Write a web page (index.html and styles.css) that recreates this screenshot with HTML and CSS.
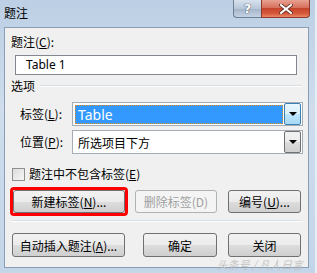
FILE: index.html
```html
<!DOCTYPE html>
<html lang="zh-CN">
<head>
    <meta charset="UTF-8">
    <title>题注</title>
    <link rel="stylesheet" href="styles.css">
</head>
<body>

    <div class="window">
        <div class="titlebar">
            <span class="title">题注</span>
            <div class="caption-buttons">
                <span class="cap-btn help">?</span>
                <span class="cap-btn close">
                    <svg width="14" height="10" viewBox="0 0 14 10">
                        <path d="M2 1 L12 9 M12 1 L2 9" stroke="#5a2a20" stroke-width="3.6" stroke-linecap="square"/>
                        <path d="M2 1 L12 9 M12 1 L2 9" stroke="#ffffff" stroke-width="2" stroke-linecap="square"/>
                    </svg>
                </span>
            </div>
        </div>

        <div class="client">
            <div class="field-label">题注(<u>C</u>):</div>
            <div class="textbox">Table 1</div>

            <div class="group">
                <span>选项</span>
                <span class="group-line"></span>
            </div>

            <div class="combo-row">
                <span class="combo-label">标签(<u>L</u>):</span>
                <div class="combo">
                    <span class="combo-value selected">Table</span>
                    <span class="drop hot"><span class="arrow"></span></span>
                </div>
            </div>
            <div class="combo-row second">
                <span class="combo-label">位置(<u>P</u>):</span>
                <div class="combo">
                    <span class="combo-value">所选项目下方</span>
                    <span class="drop"><span class="arrow"></span></span>
                </div>
            </div>

            <label class="check-row">
                <span class="checkbox"></span>
                <span>题注中不包含标签(<u>E</u>)</span>
            </label>

            <div class="button-row">
                <div class="highlight">
                    <button class="btn w-new">新建标签(<u>N</u>)...</button>
                </div>
                <button class="btn w-del" disabled>删除标签(D)</button>
                <button class="btn w-num">编号(<u>U</u>)...</button>
            </div>

            <div class="separator"></div>

            <div class="button-row bottom">
                <button class="btn w-auto">自动插入题注(<u>A</u>)...</button>
                <button class="btn w-ok">确定</button>
                <button class="btn w-close">关闭</button>
            </div>
        </div>

        <span class="watermark">头条号 / 凡人日言</span>
    </div>

</body>
</html>
```

FILE: styles.css
```css
body {
    margin: 0;
    background-color: #e8eef5;
    font-family: "Noto Sans CJK SC", "Noto Sans", sans-serif;
    font-size: 12px;
    color: #000;
}

.window {
    position: relative;
    width: 305px;
    height: 268px;
    padding: 0 6px 5px 4px;
    background: linear-gradient(180deg, #bccfe4 0%, #cfdded 40%, #c3d5e9 100%);
    display: flex;
    flex-direction: column;
}

/* Title bar */
.titlebar {
    height: 27px;
    display: flex;
    justify-content: space-between;
    align-items: flex-start;
}

.title {
    margin-top: 5px;
    line-height: 16px;
}

.caption-buttons {
    display: flex;
    margin-right: -1px;
}

.cap-btn {
    height: 17px;
    display: flex;
    justify-content: center;
    align-items: center;
    border: 1px solid #6d7f95;
    border-top: none;
}

.help {
    width: 27px;
    border-radius: 0 0 0 4px;
    border-right: none;
    background: linear-gradient(180deg, #d8e2ee 0%, #b9c7d8 50%, #a3b3c8 51%, #c4d2e2 100%);
    color: #fff;
    font-family: "DejaVu Sans", sans-serif;
    font-weight: bold;
    font-size: 13px;
    text-shadow: 0 0 1px #3c4a5c, 0 0 1px #3c4a5c;
}

.close {
    width: 47px;
    border-radius: 0 0 4px 0;
    border-color: #8b3a2c;
    background: linear-gradient(180deg, #e8a191 0%, #d6705c 45%, #c4452c 50%, #d9593b 80%, #e88a66 100%);
}

/* Client area */
.client {
    flex: 1;
    background-color: #f0f0f0;
    border: 1px solid #8a9db4;
    display: flex;
    flex-direction: column;
}

.field-label {
    margin: 6px 0 0 6px;
    line-height: 16px;
}

.textbox {
    margin: 5px 0 0 10px;
    width: 270px;
    height: 18px;
    padding-left: 10px;
    border: 1px solid #828790;
    background-color: #fff;
    line-height: 18px;
    font-family: "Noto Sans", sans-serif;
}

.group {
    margin: 3px 6px 0 6px;
    display: flex;
    align-items: center;
    line-height: 16px;
}

.group-line {
    flex: 1;
    height: 1px;
    margin-left: 5px;
    background-color: #d5dfe5;
    border-bottom: 1px solid #fff;
}

.combo-row {
    margin-top: 8px;
    display: flex;
    align-items: center;
}

.combo-row.second {
    margin-top: 4px;
}

.combo-label {
    width: 52px;
    padding-left: 15px;
    line-height: 16px;
}

.combo {
    width: 227px;
    height: 22px;
    border: 1px solid #a5acb5;
    background-color: #fff;
    display: flex;
    align-items: center;
    padding: 0 0 0 2px;
}

.combo-value {
    flex: 1;
    height: 19px;
    line-height: 19px;
    padding-left: 3px;
}

.combo-value.selected {
    background-color: #3399ff;
    color: #fff;
    outline: 1px dotted #e08a20;
    outline-offset: -1px;
    font-family: "Noto Sans", sans-serif;
    font-size: 14px;
}

.drop {
    width: 15px;
    height: 20px;
    margin: 0 1px 0 1px;
    border: 1px solid #707070;
    border-radius: 2px;
    background: linear-gradient(180deg, #f2f2f2 0%, #ebebeb 50%, #dddddd 51%, #cfcfcf 100%);
    display: flex;
    justify-content: center;
    align-items: center;
}

.drop.hot {
    border-color: #3c7fb1;
    background: linear-gradient(180deg, #eaf6fd 0%, #d9f0fc 50%, #bee6fd 51%, #a7d9f5 100%);
}

.arrow {
    width: 0;
    height: 0;
    border-left: 4px solid transparent;
    border-right: 4px solid transparent;
    border-top: 4px solid #000;
}

.check-row {
    margin: 12px 0 0 7px;
    display: flex;
    align-items: center;
    gap: 4px;
    line-height: 16px;
}

.checkbox {
    width: 11px;
    height: 11px;
    border: 1px solid #8e8f8f;
    background: linear-gradient(135deg, #dcdcdc 0%, #f6f6f6 100%);
}

.button-row {
    margin: 5px 0 0 5px;
    display: flex;
    align-items: center;
}

.highlight {
    border: 3px solid #ff0000;
    border-radius: 4px;
    display: flex;
}

.btn {
    height: 23px;
    padding: 0;
    border: 1px solid #707070;
    border-radius: 3px;
    background: linear-gradient(180deg, #f2f2f2 0%, #ebebeb 50%, #dddddd 51%, #cfcfcf 100%);
    font-family: "Noto Sans CJK SC", "Noto Sans", sans-serif;
    font-size: 12px;
    color: #000;
}

.btn:disabled {
    border-color: #adb2b5;
    background: #f4f4f4;
    color: #a0a0a0;
}

.w-new { width: 112px; }
.w-del { width: 82px; margin-left: 7px; }
.w-num { width: 73px; margin-left: 11px; }

.separator {
    margin: 4px 7px 0 7px;
    height: 1px;
    background-color: #d5dfe5;
    border-bottom: 1px solid #fff;
}

.button-row.bottom {
    margin: 11px 0 0 7px;
}

.button-row.bottom .btn {
    height: 24px;
}

.w-auto { width: 113px; }
.w-ok { width: 74px; margin-left: 18px; }
.w-close { width: 73px; margin-left: 11px; }

.watermark {
    position: absolute;
    right: 12px;
    bottom: 1px;
    font-size: 11px;
    color: rgba(190, 190, 190, 0.9);
    font-style: italic;
}
```
